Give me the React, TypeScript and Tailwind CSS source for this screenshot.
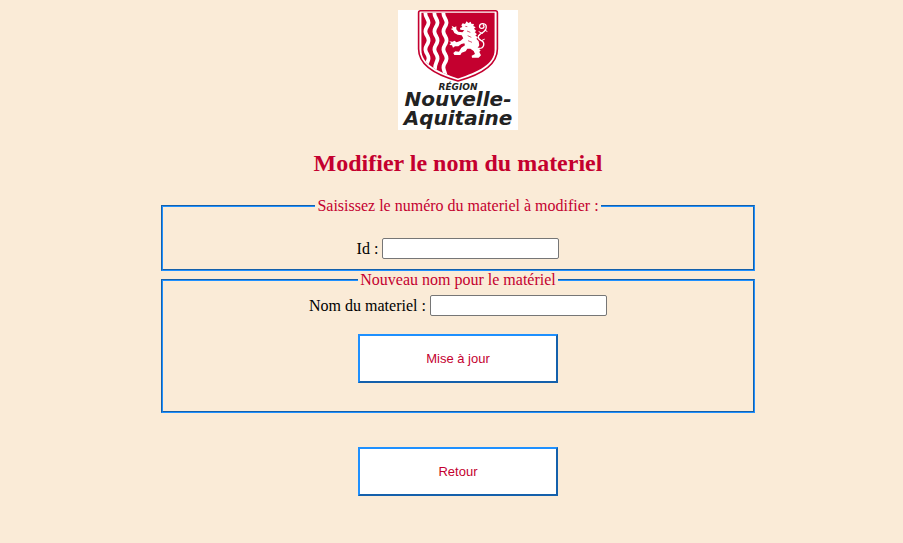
import type { ReactNode } from "react";

function Logo() {
  return (
    <svg
      viewBox="0 0 120 120"
      className="size-[120px] bg-white"
      role="img"
      aria-label="Région Nouvelle-Aquitaine"
    >
      <defs>
        <clipPath id="shield">
          <path d="M23.4 2.800H96.600V40C96.600 54 80 62 60 68.400C40 62 23.400 54 23.400 40V2.800Z" />
        </clipPath>
      </defs>
      <path
        d="M22.500 .8H97.500Q99.400 .8 99.400 2.700V39C99.400 56 82 65 60 71C38 65 20.600 56 20.600 39V2.700Q20.600 .8 22.500 .8Z"
        fill="#fff"
        stroke="#c4002f"
        strokeWidth="1.600"
      />
      <g clipPath="url(#shield)">
        <path d="M20 0H100V72H20Z" fill="#c4002f" />
        <g fill="none" stroke="#fff" strokeWidth="3.800">
          <path d="M27.500 2C26.500 7 31 9 30.500 13S27 18 27.500 22S31 27 30.500 31S27 36 27.500 40S31 45 30.500 49S27 54 28 60" />
          <path d="M36.500 2C35.500 7 40 9 39.500 13S36 18 36.500 22S40 27 39.500 31S36 36 36.500 40S40 45 39.500 49S36 54 37 62" />
          <path d="M45.500 2C44.500 7 49 9 48.500 13S45 18 45.500 22S49 27 48.500 31S45 36 45.500 40S49 45 48.500 49S45 54 45.500 58S48 63 48 70" />
        </g>
      </g>
      <g transform="translate(42 5) scale(.3333)">
        <path
          d="M68 25L75 27L80 19L85 24L92 20L94 26L102 27L100 33L107 37L102 41L109 48L104 51L111 58L106 61L114 68L109 71L116 79L118 91L113 99L122 106L118 111L123 121L116 128H96L95 122L105 117L101 108L91 101L82 101L77 109L65 113L61 120H43L40 114L46 109L57 110L64 98L75 91L73 85L64 87L55 94L45 94L39 98L36 91L28 90L33 84L28 79L38 80L43 77L50 82L62 77L70 70L65 61L53 59L43 54L39 46L32 42L38 40L35 32L43 37L49 34L49 43L55 50L67 52L73 46L61 44L60 39L67 36L64 31Z"
          fill="#fff"
        />
        <path
          d="M76 34L82 35M81 48L91 52M83 62L94 67M84 77L96 82"
          fill="none"
          stroke="#c4002f"
          strokeWidth="2"
        />
        <g fill="none" stroke="#fff" strokeLinecap="round">
          <path
            d="M114 100C134 102 136 82 123 76C108 68 116 58 126 54C143 45 142 27 129 26C117 25 115 40 125 40C132 40 134 34 130 30"
            strokeWidth="4"
          />
          <path d="M127 55L117 50M121 59L115 62M124 77L133 73M135 46L141 49" strokeWidth="3" />
        </g>
      </g>
      <g
        fill="#222"
        fontFamily="'DejaVu Sans', sans-serif"
        fontWeight="bold"
        fontStyle="italic"
      >
        <text x="60" y="80" fontSize="9" textAnchor="middle">RÉGION</text>
        <text x="60" y="96" fontSize="20" textAnchor="middle">Nouvelle-</text>
        <text x="60" y="115" fontSize="20" textAnchor="middle">Aquitaine</text>
      </g>
    </svg>
  );
}

function Group({ title, children }: { title: string; children: ReactNode }) {
  return (
    <fieldset className="w-full max-w-[594px] border-2 [border-style:groove] border-[#1e90ff] px-3">
      <legend className="mx-auto px-[2px] text-[#c4002f]">{title}</legend>
      {children}
    </fieldset>
  );
}

function Field({ id, label }: { id: string; label: string }) {
  return (
    <div className="flex items-center justify-center gap-1">
      <label htmlFor={id}>{label}</label>
      <input
        id={id}
        type="text"
        className="h-[21px] w-[177px] rounded-[2px] border border-[#767676] bg-white px-1 font-['Liberation_Sans',sans-serif] text-[13px]"
      />
    </div>
  );
}

function ActionButton({ type, children }: { type: "submit" | "button"; children: ReactNode }) {
  return (
    <button
      type={type}
      className="h-[49px] w-[200px] border-2 [border-style:outset] border-[#1e90ff] bg-white font-['Liberation_Sans',sans-serif] text-[13px] text-[#c4002f]"
    >
      {children}
    </button>
  );
}

export default function App() {
  return (
    <main className="flex min-h-screen flex-col items-center bg-[#faebd7] pt-[10px] pb-8 pl-[13px] font-['Liberation_Serif',serif] text-base leading-[18px] text-black">
      <Logo />
      <h1 className="mt-[19px] text-2xl leading-7 font-bold text-[#c4002f]">
        Modifier le nom du materiel
      </h1>
      <form className="mt-5 flex w-full flex-col items-center">
        <Group title="Saisissez le numéro du materiel à modifier :">
          <div className="pt-[23px] pb-[10px]">
            <Field id="materiel-id" label="Id :" />
          </div>
        </Group>
        <Group title="Nouveau nom pour le matériel">
          <div className="flex flex-col items-center gap-[18px] pt-[6px] pb-7">
            <Field id="materiel-nom" label="Nom du materiel :" />
            <ActionButton type="submit">Mise à jour</ActionButton>
          </div>
        </Group>
      </form>
      <div className="mt-[34px]">
        <ActionButton type="button">Retour</ActionButton>
      </div>
    </main>
  );
}
